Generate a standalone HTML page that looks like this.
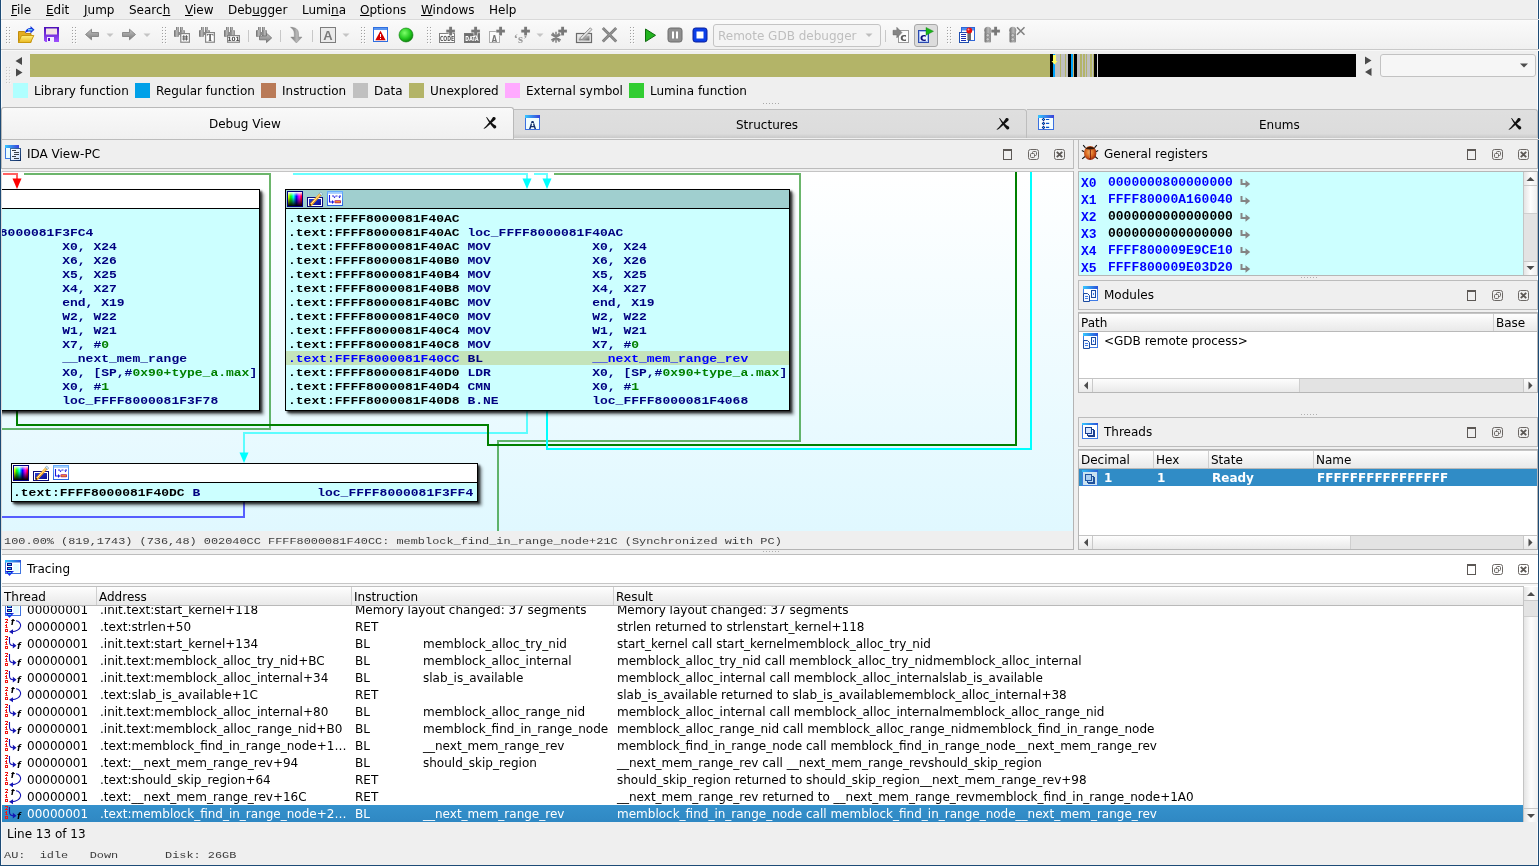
<!DOCTYPE html>
<html><head><meta charset="utf-8"><title>IDA</title>
<style>
html,body{margin:0;padding:0}
body{width:1539px;height:866px;overflow:hidden;background:#efefef;font:12px/14px "DejaVu Sans","Liberation Sans",sans-serif;color:#000;position:relative}
.a,.a div,.a svg,.a>span,.a div>span{position:absolute}
.t{white-space:pre;line-height:14px;height:14px}
.m{font:bold 13px/14px "Liberation Mono","DejaVu Sans Mono",monospace;white-space:pre;transform:scaleY(.85);transform-origin:0 10px}
.s{font:11.9px/14px "Liberation Mono","DejaVu Sans Mono",monospace;white-space:pre;color:#3c3c3c;transform:scaleY(.82);transform-origin:0 10px}
u{text-decoration:underline;text-underline-offset:1px}
.mr{transform:scaleY(.93)}
.nv{color:#000080}.bl{color:#0000ff}.gr{color:#008000}
.node{border:1px solid #000;background:#ccffff;box-shadow:2px 2px 2px rgba(0,0,0,.75),4px 4px 3px rgba(0,0,0,.35)}
.node .tb{left:0;top:0;right:0;height:18px;border-bottom:1px solid #000;background:#fff}
.hdr{background:linear-gradient(#fefefe,#f3f3f3 50%,#e9e9e9);border-top:1px solid #c6c6c6;border-bottom:1px solid #b9b9b9}
.hdr i{position:absolute;top:0;width:1px;height:17px;background:#cfcfcf}
.sel{background:#308cc6;color:#fff}
.dt{border:1px solid #bcbcbc;height:28px}
</style></head>
<body>
<div id="w" style="position:absolute;left:0;top:0;width:1539px;height:866px;will-change:transform">
<div class="a" style="left:1px;top:20px;width:1537px;height:29px;background:linear-gradient(#fafafa,#f0f0f0)"></div>
<div class="a" style="left:0;top:0;width:1px;height:866px;background:#1d4b76"></div>
<div class="a" style="left:1px;top:0;width:1px;height:865px;background:#f6f8fa"></div>
<div class="a" style="left:1538px;top:0;width:1px;height:866px;background:#1d4b76"></div>
<div class="a" style="left:1537px;top:0;width:1px;height:865px;background:#f8f8f8"></div>
<div class="a" style="left:0;top:865px;width:1539px;height:1px;background:#1d4b76"></div>
<div class="a" id="menu" style="left:0;top:0;width:1539px;height:20px"><span class="t" style="left:11px;top:3px"><u>F</u>ile</span><span class="t" style="left:46px;top:3px"><u>E</u>dit</span><span class="t" style="left:84px;top:3px"><u>J</u>ump</span><span class="t" style="left:129px;top:3px">Searc<u>h</u></span><span class="t" style="left:185px;top:3px"><u>V</u>iew</span><span class="t" style="left:228px;top:3px">Deb<u>u</u>gger</span><span class="t" style="left:302px;top:3px">Lumi<u>n</u>a</span><span class="t" style="left:360px;top:3px"><u>O</u>ptions</span><span class="t" style="left:421px;top:3px"><u>W</u>indows</span><span class="t" style="left:489px;top:3px">Help</span></div>
<div class="a" style="left:1px;top:19px;width:1538px;height:1px;background:#d9d9d9"></div>
<div class="a" style="left:1px;top:20px;width:1537px;height:1px;background:#fbfbfb"></div>
<div class="a" style="left:1px;top:49px;width:1538px;height:1px;background:#c9c9c9"></div>
<div class="a" style="left:1px;top:50px;width:1538px;height:1px;background:#f8f8f8"></div>
<svg class="a" id="toolbar" style="left:0;top:20px" width="1539" height="30" viewBox="0 20 1539 30">
<defs>
<g id="grip"><g fill="#a0a0a0"><rect x="0" y="0" width="1" height="1"/><rect x="3" y="0" width="1" height="1"/><rect x="0" y="3" width="1" height="1"/><rect x="3" y="3" width="1" height="1"/><rect x="0" y="6" width="1" height="1"/><rect x="3" y="6" width="1" height="1"/><rect x="0" y="9" width="1" height="1"/><rect x="3" y="9" width="1" height="1"/><rect x="0" y="12" width="1" height="1"/><rect x="3" y="12" width="1" height="1"/><rect x="0" y="15" width="1" height="1"/><rect x="3" y="15" width="1" height="1"/></g><g fill="#fdfdfd"><rect x="1" y="1" width="1" height="1"/><rect x="4" y="1" width="1" height="1"/><rect x="1" y="4" width="1" height="1"/><rect x="4" y="4" width="1" height="1"/><rect x="1" y="7" width="1" height="1"/><rect x="4" y="7" width="1" height="1"/><rect x="1" y="10" width="1" height="1"/><rect x="4" y="10" width="1" height="1"/><rect x="1" y="13" width="1" height="1"/><rect x="4" y="13" width="1" height="1"/><rect x="1" y="16" width="1" height="1"/><rect x="4" y="16" width="1" height="1"/></g></g>
<linearGradient id="gfold" x1="0" y1="0" x2="0" y2="1"><stop offset="0" stop-color="#fff27e"/><stop offset="1" stop-color="#e9b822"/></linearGradient>
<linearGradient id="gflop" x1="0" y1="0" x2="0" y2="1"><stop offset="0" stop-color="#4b0fb8"/><stop offset="1" stop-color="#a050ff"/></linearGradient>
<radialGradient id="gball" cx=".4" cy=".35" r=".7"><stop offset="0" stop-color="#7dff6a"/><stop offset=".6" stop-color="#22c81e"/><stop offset="1" stop-color="#0b7a0b"/></radialGradient>
<linearGradient id="gmet" x1="0" y1="0" x2="1" y2="0"><stop offset="0" stop-color="#6c6c6c"/><stop offset=".55" stop-color="#b9b9b9"/><stop offset="1" stop-color="#8a8a8a"/></linearGradient>
<linearGradient id="garr" x1="0" y1="0" x2="0" y2="1"><stop offset="0" stop-color="#c2c2c2"/><stop offset="1" stop-color="#7c7c7c"/></linearGradient>
<g id="bino"><rect x="2" y="2" width="3" height="4" fill="url(#gmet)"/><rect x="6" y="2" width="3" height="4" fill="url(#gmet)"/><rect x="0" y="5" width="5" height="7" rx="1" fill="url(#gmet)"/><rect x="6" y="5" width="5" height="7" rx="1" fill="url(#gmet)"/><rect x="4" y="7" width="3" height="3" fill="#8c8c8c"/></g>
<path id="dd" d="M0 0h7l-3.500 3.500z" fill="#c4c4c4"/>
<g id="plus"><g fill="#efefef"><rect x="2.300" y="-.5" width="4" height="9.600"/><rect x="-.5" y="2.300" width="9.600" height="4"/></g><g fill="#787878"><rect x="2.900" y="0" width="2.800" height="8.600"/><rect x="0" y="2.900" width="8.600" height="2.800"/></g></g>
<g id="bpt"><rect x=".5" y="5.500" width="6.500" height="10.500" rx="1" fill="url(#gmet)"/><circle cx="3.800" cy="3.800" r="3.500" fill="url(#gmet)"/><circle cx="3.800" cy="8.800" r="1.700" fill="#c8c8c8" stroke="#6a6a6a" stroke-width=".5"/><circle cx="3.800" cy="12.800" r="1.700" fill="#c8c8c8" stroke="#6a6a6a" stroke-width=".5"/></g>
</defs>
<use href="#grip" x="6" y="27"/><use href="#grip" x="72" y="27"/><use href="#grip" x="162" y="27"/><use href="#grip" x="361" y="27"/><use href="#grip" x="427" y="27"/><use href="#grip" x="630" y="27"/><use href="#grip" x="947" y="27"/>
<!-- open folder -->
<path d="M18.500 31.500h6l1.500 2h5v9h-12.500z" fill="#e3ac1e" stroke="#c08c0c" stroke-width="1"/>
<path d="M21.500 35.500h12.300l-3.300 7h-12z" fill="url(#gfold)" stroke="#c9980e" stroke-width="1"/>
<path d="M25 33c.5-3.500 2.700-5 5.500-5v-2l4 3.700-4 3.700v-2c-2.300 0-3.700.3-5.500 1.600z" fill="#1433dd"/><path d="M28 29.800h4.300" stroke="#7fe9ff" stroke-width="1.300"/>
<!-- floppy -->
<path d="M44 27h15v15h-13.500l-1.500-1.500z" fill="url(#gflop)"/>
<rect x="46" y="28.500" width="11" height="6" fill="#f3e2e2"/><rect x="47" y="37" width="7" height="5" fill="#f1ecff"/><rect x="48" y="38" width="2" height="3" fill="#5b12c8"/>
<!-- back / fwd -->
<path d="M85.500 34.500l6-5.300v3.300h7v4h-7v3.300z" fill="url(#garr)" stroke="#7a7a7a" stroke-width=".8"/>
<use href="#dd" x="106.500" y="33.500"/>
<path d="M135.500 34.500l-6-5.300v3.300h-7v4h7v3.300z" fill="url(#garr)" stroke="#7a7a7a" stroke-width=".8"/>
<use href="#dd" x="143.500" y="33.500"/>
<!-- binoculars -->
<use href="#bino" x="174" y="25"/><rect x="180.800" y="33.600" width="8.600" height="8.600" fill="#fff" stroke="#858585" stroke-width="1.200"/><path d="M183.800 35.200v5.400M186.400 35.200v5.400M182.300 36.900h5.600M182.300 39h5.600" stroke="#5a5a5a" stroke-width="1"/>
<use href="#bino" x="199" y="25"/><rect x="205.600" y="32.600" width="8.800" height="9.600" fill="#fff" stroke="#858585" stroke-width="1.200"/><text x="210" y="41.300" font-family="Liberation Serif,serif" font-weight="bold" font-size="10" text-anchor="middle" fill="#5a5a5a">T</text>
<use href="#bino" x="224" y="25"/><rect x="227.600" y="35.600" width="11.800" height="6.600" fill="#fff" stroke="#858585" stroke-width="1.200"/><text x="233.500" y="41.200" font-family="DejaVu Sans,sans-serif" font-weight="bold" font-size="5.800" text-anchor="middle" fill="#4a4a4a">101</text>
<rect x="248" y="30" width="1" height="12" fill="#c8c8c8"/>
<use href="#bino" x="256" y="25"/><path d="M259.500 36h7v-2.800l5.200 4.700-5.200 4.700v-2.800h-7z" fill="url(#garr)" stroke="#707070" stroke-width=".8"/>
<rect x="280" y="30" width="1" height="12" fill="#c8c8c8"/>
<path d="M290.500 27.300c5 0 8 2 8 6.500v3.300h3.500l-5.600 5.900-5.600-5.900h3.500v-3.300c0-3-1.300-5-3.800-6.500z" fill="url(#gmet)" stroke="#8a8a8a" stroke-width=".5"/>
<rect x="312" y="30" width="1" height="12" fill="#c8c8c8"/>
<rect x="320.500" y="27.500" width="15" height="15" fill="#ebebeb" stroke="#7d7d7d" stroke-width="1"/><text x="328" y="40" font-family="Liberation Sans,sans-serif" font-weight="bold" font-size="13" text-anchor="middle" fill="#7a7a7a">A</text>
<use href="#dd" x="342.500" y="33.500"/>
<!-- warning window -->
<rect x="373.500" y="27.500" width="14" height="14" fill="#fff" stroke="#2f6fe0" stroke-width="1"/><rect x="374" y="28" width="13" height="2" fill="#5a96f0"/>
<path d="M380.500 30.800l5.200 9.400h-10.400z" fill="#d40000"/><rect x="380" y="34" width="1" height="3" fill="#fff"/><rect x="380" y="38" width="1" height="1" fill="#fff"/>
<circle cx="406" cy="35" r="7" fill="url(#gball)" stroke="#0a7a0a" stroke-width=".6"/>
<!-- CODE+ DATA+ A+ 's'+ *+ -->
<rect x="439.500" y="33.500" width="15" height="9" fill="#fff" stroke="#7f7f7f"/><text x="0" y="0" transform="translate(447 41.300) scale(.82 1.25)" font-family="DejaVu Sans,sans-serif" font-weight="bold" font-size="5.600" text-anchor="middle" fill="#5a5a5a">CODE</text><use href="#plus" x="446.300" y="26.800"/>
<rect x="464.500" y="33.500" width="15" height="9" fill="#6e6e6e" stroke="#767676"/><text x="0" y="0" transform="translate(472 41.300) scale(.82 1.25)" font-family="DejaVu Sans,sans-serif" font-weight="bold" font-size="5.600" text-anchor="middle" fill="#fff">DATA</text><use href="#plus" x="471.300" y="26.800"/>
<rect x="489.500" y="31.500" width="10" height="11" fill="#fbfbfb" stroke="#adadad"/><text x="0" y="0" transform="translate(494.500 41.500) scale(.8 1.1)" font-family="DejaVu Sans,sans-serif" font-weight="bold" font-size="8.500" text-anchor="middle" fill="#777">A</text><use href="#plus" x="496.300" y="26.800"/>
<text x="520.500" y="42.700" font-family="Liberation Serif,serif" font-weight="bold" font-size="13" text-anchor="middle" fill="#9a9a9a">‘s’</text><use href="#plus" x="521.300" y="26.800"/>
<use href="#dd" x="536.500" y="33.500"/>
<path d="M556 31.800v11M551.300 34.500l9.400 5.600M551.300 40.100l9.400-5.600M552.500 32.800l7 9M559.500 32.800l-7 9" stroke="#808080" stroke-width="1.500"/><use href="#plus" x="558.300" y="26.800"/>
<!-- pencil rect -->
<defs><linearGradient id="gpen" x1="0" y1="0" x2="1" y2="1"><stop offset="0" stop-color="#fafafa"/><stop offset="1" stop-color="#5f5f5f"/></linearGradient></defs>
<rect x="576.500" y="33.500" width="15" height="9" fill="#e8e8e8" stroke="#6a6a6a" stroke-width="1.200"/><rect x="578.500" y="35.500" width="11" height="5" fill="url(#gpen)"/><path d="M579.500 40l1.200-2.600 9.600-9.600 1.700 1.700-9.600 9.600z" fill="#e4e4e4" stroke="#7a7a7a" stroke-width=".8"/>
<path d="M602.800 28l13.400 13.600M616.200 28l-13.400 13.600" stroke="#7c7c7c" stroke-width="2.800"/><path d="M602.800 28l13.400 13.600M616.200 28l-13.400 13.600" stroke="#a4a4a4" stroke-width=".8"/>
<!-- play pause stop -->
<path d="M645.500 29l10 6.300-10 6.300z" fill="#22b41f" stroke="#0d6a0d" stroke-width="1"/>
<rect x="668" y="28" width="14" height="14" rx="2.500" fill="#8f8f8f" stroke="#6d6d6d" stroke-width="1"/><rect x="672" y="31.500" width="2" height="7" fill="#fff"/><rect x="676" y="31.500" width="2" height="7" fill="#fff"/>
<rect x="693" y="28" width="14" height="14" rx="2.500" fill="#0b3fe8" stroke="#0a1f9a" stroke-width="1"/><rect x="696.500" y="31.500" width="7" height="7" fill="#fff"/>
<!-- combobox -->
<rect x="713.500" y="24.500" width="167" height="22" rx="2.500" fill="#f4f4f4" stroke="#c4c4c4"/>
<text x="718" y="39.500" font-family="DejaVu Sans,sans-serif" font-size="12" fill="#bebebe">Remote GDB debugger</text>
<path d="M865.500 33.500h7l-3.500 3.500z" fill="#bdbdbd"/>
<rect x="885" y="30" width="1" height="12" fill="#c8c8c8"/>
<!-- ->C -->
<rect x="898.500" y="30.500" width="10" height="12" fill="#fdfdfd" stroke="#9a9a9a"/><text x="903.500" y="41" font-family="DejaVu Sans,sans-serif" font-weight="bold" font-size="11" text-anchor="middle" fill="#5a5a5a">c</text><path d="M893 30.300h3.800v-3l5.200 5.300-5.200 5.300v-3h-3.800z" fill="#858585" stroke="#6a6a6a" stroke-width=".5"/>
<!-- pressed C flag -->
<rect x="914.500" y="24.500" width="23" height="22" rx="2.500" fill="#dcdcdc" stroke="#a8a8a8"/>
<rect x="918.500" y="30.500" width="10" height="12" fill="#f4f8ff" stroke="#2a4ab0"/><rect x="919.500" y="31.500" width="8" height="10" fill="none" stroke="#9ab4f0" stroke-width=".8"/><text x="923.300" y="41" font-family="DejaVu Sans,sans-serif" font-weight="bold" font-size="11" text-anchor="middle" fill="#0a0a78">c</text><path d="M926 27.400l7.500 3.900-7.500 3.900z" fill="#18b418" stroke="#0c7a0c" stroke-width=".4"/>
<!-- breakpoint list etc -->
<rect x="961.500" y="27.500" width="13" height="13" fill="#fff" stroke="#2f66d8"/><rect x="962" y="28" width="12" height="2.500" fill="#4a8cf0"/><rect x="959.500" y="32.500" width="9" height="10" fill="#fff" stroke="#1f4fb0"/><path d="M961 34.500h5M961 36.500h5M961 38.500h5M961 40.500h5" stroke="#1a2fb0" stroke-width="1" shape-rendering="crispEdges"/><rect x="967.800" y="32" width="3" height="8" fill="#6a6a6a" stroke="#444" stroke-width=".4"/><circle cx="969.300" cy="30.500" r="2.900" fill="#e81010"/><circle cx="968.500" cy="29.600" r="1" fill="#ff9a9a"/>
<use href="#bpt" x="984" y="26.500"/><use href="#plus" x="991.300" y="26.800"/>
<use href="#bpt" x="1009" y="26.500"/><path d="M1017 27.300l7.500 7.500M1024.500 27.300l-7.500 7.500" stroke="#7f7f7f" stroke-width="1.500"/>
</svg>

<svg class="a" id="nav" style="left:0;top:51px" width="1539" height="56" viewBox="0 51 1539 56" shape-rendering="crispEdges">
<use href="#grip" x="6" y="67" opacity=".5"/>
<path d="M22 57v8l-6.500-4z" fill="#4a4a4a" shape-rendering="auto"/><path d="M16 68.500v8l6.500-4z" fill="#4a4a4a" shape-rendering="auto"/>
<rect x="30" y="54" width="1326" height="23" fill="#b3b468"/>
<g>
<rect x="1050" y="54" width="3" height="23" fill="#000"/><rect x="1053" y="54" width="2" height="23" fill="#00a5ff"/><rect x="1055" y="54" width="13" height="23" fill="#c0c0c0"/>
<rect x="1060" y="54" width="1" height="23" fill="#b3b468"/><rect x="1065" y="54" width="1" height="23" fill="#b3b468"/>
<rect x="1068" y="54" width="3" height="23" fill="#000"/><rect x="1071" y="54" width="2" height="23" fill="#00a5ff"/><rect x="1073" y="54" width="1" height="23" fill="#c9b46a"/><rect x="1074" y="54" width="3" height="23" fill="#000"/>
<rect x="1077" y="54" width="17" height="23" fill="#c0c0c0"/>
<rect x="1080" y="54" width="2" height="23" fill="#b3b468"/><rect x="1083" y="54" width="2" height="23" fill="#b3b468"/><rect x="1086" y="54" width="1" height="23" fill="#b3b468"/><rect x="1090" y="54" width="2" height="23" fill="#b3b468"/><rect x="1093" y="54" width="1" height="23" fill="#b3b468"/>
<rect x="1094" y="54" width="3" height="23" fill="#000"/><rect x="1097" y="54" width="1" height="23" fill="#d8d8d8"/><rect x="1098" y="54" width="258" height="23" fill="#000"/>
<path d="M1053 55h3v6h1.500l-3 3.500-3-3.500h1.500z" fill="#ffff66" shape-rendering="auto"/>
</g>
<path d="M1365 56.500v8l6.500-4z" fill="#4a4a4a" shape-rendering="auto"/><path d="M1371.500 68v8l-6.500-4z" fill="#4a4a4a" shape-rendering="auto"/>
<g shape-rendering="auto"><rect x="1380.500" y="54.500" width="155" height="22" rx="2.500" fill="#f6f6f6" stroke="#c2c2c2"/><path d="M1520 63.500h8l-4 4z" fill="#4d4d4d"/></g>
<!-- legend -->
<rect x="13" y="83" width="15" height="15" fill="#afffff"/><rect x="135" y="83" width="15" height="15" fill="#00a0e8"/><rect x="261" y="83" width="15" height="15" fill="#b97a57"/><rect x="353" y="83" width="15" height="15" fill="#c0c0c0"/><rect x="409" y="83" width="15" height="15" fill="#b3b468"/><rect x="505" y="83" width="15" height="15" fill="#ffaaff"/><rect x="629" y="83" width="15" height="15" fill="#32cd32"/>
<g fill="#a9a9a9"><rect x="763" y="103" width="1" height="1"/><rect x="766" y="103" width="1" height="1"/><rect x="769" y="103" width="1" height="1"/><rect x="772" y="103" width="1" height="1"/><rect x="775" y="103" width="1" height="1"/><rect x="778" y="103" width="1" height="1"/></g>
</svg>
<div class="a" id="legend" style="left:0;top:84px;width:800px;height:16px">
<span class="t" style="left:34px;top:0">Library function</span><span class="t" style="left:156px;top:0">Regular function</span><span class="t" style="left:282px;top:0">Instruction</span><span class="t" style="left:374px;top:0">Data</span><span class="t" style="left:430px;top:0">Unexplored</span><span class="t" style="left:526px;top:0">External symbol</span><span class="t" style="left:650px;top:0">Lumina function</span>
</div>

<div class="a" id="tabs" style="left:0;top:106px;width:1539px;height:35px">
<div style="left:1px;top:33px;width:1538px;height:1px;background:#bcbcbc"></div>
<div style="left:1px;top:1px;width:513px;height:32px;border:1px solid #b9b9b9;border-bottom:none;border-radius:3px 3px 0 0;background:linear-gradient(#f9f9f9,#f0f0f0);box-sizing:border-box"></div>
<div style="left:514px;top:3px;width:513px;height:29px;border:1px solid #bdbdbd;border-left:none;border-bottom:none;border-radius:0 3px 0 0;background:linear-gradient(#dfdfdf,#dcdcdc 85%,#c9c9c9);box-sizing:border-box"></div>
<div style="left:1027px;top:3px;width:511px;height:29px;border:1px solid #bdbdbd;border-left:none;border-bottom:none;border-radius:0 3px 0 0;background:linear-gradient(#dfdfdf,#dcdcdc 85%,#c9c9c9);box-sizing:border-box"></div>
<span class="t" style="left:209px;top:11px">Debug View</span>
<span class="t" style="left:736px;top:12px">Structures</span>
<span class="t" style="left:1259px;top:12px">Enums</span>
<svg style="left:0;top:0" width="1539" height="35" viewBox="0 106 1539 35">
<defs><g id="tabx"><path d="M9.400 0.200C11.500 -0.500 12.800 0.800 11.900 2.600L2.600 10.800C1.600 11.600 0.200 11.900 0 11.600C3.500 8 7 4 9.400 0.200Z" fill="#111"/><path d="M2.500 0.100C2.900 -0.100 3.400 0.100 3.700 0.500C6 4 9.200 6.800 12.500 8.800C13.300 10.400 12.300 11.900 10.500 11.500C7.500 8.300 4.700 4.500 2.500 0.100Z" fill="#111"/></g></defs>
<use href="#tabx" x="483.500" y="117"/><use href="#tabx" x="996.500" y="118"/><use href="#tabx" x="1508.500" y="118"/>
<defs><linearGradient id="gtop4" x1="0" y1="0" x2="1" y2="0"><stop offset="0" stop-color="#35c8ff"/><stop offset="1" stop-color="#3a40d8"/></linearGradient></defs>
<g><rect x="525" y="115" width="15" height="15" fill="#3a70e0"/><rect x="525" y="115" width="15" height="3" fill="url(#gtop4)"/><rect x="526" y="118" width="13" height="11" fill="#f0fdff"/><text x="532.500" y="128.500" font-family="Liberation Sans,sans-serif" font-weight="bold" font-size="10.500" text-anchor="middle" fill="#12306a">A</text><rect x="531.500" y="123" width="2" height="1.200" fill="#f0fdff"/></g>
<g><rect x="1038" y="115" width="16" height="15" fill="#3a70e0"/><rect x="1038" y="115" width="16" height="3" fill="url(#gtop4)"/><rect x="1039" y="118" width="14" height="11" fill="#f4feff"/><g fill="#0a1a90"><path d="M1043.500 117.700l1.800 1.800-1.800 1.800-1.800-1.800zM1043.500 121.600l1.800 1.800-1.800 1.800-1.800-1.800zM1043.500 125.600l1.800 1.800-1.800 1.800-1.800-1.800z"/></g><g fill="#20e0f0"><rect x="1043" y="119" width="1" height="1"/><rect x="1043" y="122.900" width="1" height="1"/><rect x="1043" y="126.900" width="1" height="1"/></g><path d="M1046 119.500h3.200M1046 123.400h3.200M1046 127.400h3.200" stroke="#0a50c8" stroke-width="1.200"/></g>
</svg>
</div>

<svg class="a" width="0" height="0" style="left:0;top:0"><defs>
<g id="bfloat"><rect x=".5" y="1" width="8" height="9.500" fill="none" stroke="#5c5855" stroke-width="1"/><rect x="0" y="0" width="9" height="2" fill="#5c5855"/></g>
<g id="brest" fill="none" stroke="#6b6764" stroke-width="1"><rect x=".5" y=".5" width="10" height="10" rx="2"/><rect x="4.500" y="2.500" width="4" height="4" rx="1"/><rect x="2.500" y="4.500" width="4" height="4" rx="1" fill="#efefef"/></g>
<g id="bclose"><rect x=".5" y=".5" width="10" height="10" rx="2" fill="none" stroke="#6b6764" stroke-width="1"/><path d="M2.800 2.800l5.400 5.400M8.200 2.800l-5.400 5.400" stroke="#5c5855" stroke-width="1.900"/></g>
<g id="btns"><use href="#bfloat" x="0" y="0"/><use href="#brest" x="25" y="0"/><use href="#bclose" x="51" y="0"/></g>
<linearGradient id="spec" x1="0" y1="0" x2="1" y2="0"><stop offset="0" stop-color="#ffff00"/><stop offset=".2" stop-color="#00ff00"/><stop offset=".4" stop-color="#00ffff"/><stop offset=".6" stop-color="#0000ff"/><stop offset=".8" stop-color="#ff00ff"/><stop offset="1" stop-color="#ff0000"/></linearGradient>
<linearGradient id="specv" x1="0" y1="0" x2="0" y2="1"><stop offset="0" stop-color="#fff" stop-opacity="1"/><stop offset=".3" stop-color="#fff" stop-opacity="0"/><stop offset=".35" stop-color="#000" stop-opacity="0"/><stop offset="1" stop-color="#000" stop-opacity="1"/></linearGradient>
<linearGradient id="gblue" x1="0" y1="0" x2="1" y2="1"><stop offset="0" stop-color="#2a3fd0"/><stop offset="1" stop-color="#0a0a90"/></linearGradient>
<linearGradient id="gwin" x1="0" y1="0" x2="0" y2="1"><stop offset="0" stop-color="#6ab0ff"/><stop offset="1" stop-color="#2a62e0"/></linearGradient>
<g id="nicons">
<rect x="0" y="0" width="16" height="16" fill="#000080"/><rect x="1" y="1" width="14" height="14" fill="url(#spec)"/><rect x="1" y="1" width="14" height="14" fill="url(#specv)"/>
<rect x="20" y="6" width="16" height="10" fill="#0a0a78"/><rect x="21" y="7" width="14" height="8" fill="#fff"/><rect x="22" y="8" width="12" height="6" fill="url(#gblue)"/>
<path d="M23 12.600l9.800-10.600 2 1.800-9.800 10.600-2.600.8z" fill="#f5a21a"/><path d="M24.300 12.800l9.300-10" stroke="#fff3c0" stroke-width=".9"/><path d="M32.300 2.500l1.300-1.500 2.200 2-1.300 1.500z" fill="#d8e6f4" stroke="#4a8ab0" stroke-width=".5"/><path d="M23 12.600l1.300 1.600-1.900 1z" fill="#111"/>
<rect x="40" y="0" width="16" height="15" fill="url(#gwin)"/><rect x="41" y="2.500" width="14" height="11.500" fill="#fff"/><rect x="41" y="1" width="14" height="1" fill="#9fd0ff"/>
<path d="M42.500 4v7h3" fill="none" stroke="#1a1ae0" stroke-width="1.100"/><path d="M45 9l2.200 2-2.200 2z" fill="#1a1ae0"/><path d="M45 5h2M48.500 5h2M52 5h2" stroke="#1a1ae0" stroke-width=".9"/><path d="M46.200 5.500l1.300 1.800 1.300-1.800zM51.200 5.500l1.300 1.800 1.300-1.800z" fill="#1a1ae0"/>
<rect x="47.500" y="9.300" width="6.500" height="3" rx=".8" fill="#b0186a"/><rect x="48.300" y="10.200" width="5" height="1.200" fill="#ffa51a"/>
</g>
</defs></svg>
<div class="a" id="idaview" style="left:0;top:0;width:1076px;height:552px">
<div class="dt" style="left:1px;top:139px;width:1071px"></div><svg style="left:4px;top:144px" width="18" height="18" viewBox="0 0 18 18"><defs><linearGradient id="gtop3" x1="0" y1="0" x2="1" y2="0"><stop offset="0" stop-color="#35c8ff"/><stop offset="1" stop-color="#3a40d8"/></linearGradient><linearGradient id="gdoc" x1="0" y1="0" x2="1" y2="1"><stop offset="0" stop-color="#4a7ab0"/><stop offset="1" stop-color="#0a2a60"/></linearGradient><linearGradient id="gdocf" x1="0" y1="0" x2="1" y2="1"><stop offset="0" stop-color="#fff"/><stop offset="1" stop-color="#cfe2ff"/></linearGradient></defs><rect x="1" y="1" width="14" height="14" fill="#3d7ae0"/><rect x="1" y="1" width="14" height="3" fill="url(#gtop3)"/><rect x="2" y="4" width="12" height="10" fill="#eafcff"/><rect x="6" y="4" width="11" height="13" fill="url(#gdoc)"/><rect x="7" y="5" width="9" height="11" fill="url(#gdocf)"/><path d="M8 6.500h4M10 8.500h5M10 10.500h5M8 12.500h4M10 14.500h5" stroke="#3a4048" stroke-width="1"/></svg><span class="t" style="left:27px;top:147px">IDA View-PC</span><svg style="left:1003px;top:149px" width="64" height="12"><use href="#btns"/></svg>
<div style="left:2px;top:171px;width:1071px;height:1px;background:#c4c4c4"></div><div style="left:1073px;top:171px;width:1px;height:379px;background:#b4b4b4"></div><div style="left:2px;top:549px;width:1072px;height:1px;background:#b4b4b4"></div><div style="left:1px;top:171px;width:1px;height:379px;background:#dcdcdc"></div><div id="graph" style="left:2px;top:172px;width:1071px;height:359px;overflow:hidden;background:linear-gradient(#ffffff,#e0f8ff)"><div style="left:-2px;top:-172px;width:1539px;height:866px">
<svg style="left:0;top:0" width="1539" height="866" shape-rendering="crispEdges" fill="none" stroke-width="2">
<g stroke="#ff0000" stroke-opacity=".62"><path d="M3 174H17V180"/></g>
<g stroke="#008000" stroke-opacity=".58"><path d="M24 174H270V429H2"/><path d="M554 174H800V441H498V531"/></g>
<g stroke="#00ffff" stroke-opacity=".6"><path d="M293 174H527V180"/><path d="M534 174H547V180"/><path d="M527 411V433H244V453"/></g>
<g stroke="#0000ff" stroke-opacity=".62"><path d="M244 502V517H2"/></g>
<g stroke="#008000"><path d="M17 411V425H488V445H1016V172"/></g>
<g stroke="#00ffff"><path d="M547 411V449H1031V172"/></g>
<g stroke="none" shape-rendering="auto"><path d="M12.500 178.500h9l-4.500 10.500z" fill="#ff0000"/><path d="M522.500 178.500h9l-4.500 10.500z" fill="#00ffff"/><path d="M542.500 178.500h9l-4.500 10.500z" fill="#00ffff"/><path d="M239.500 452.500h9l-4.500 10.500z" fill="#00ffff"/></g>
</svg>
<div class="node" style="left:-244px;top:189px;width:502px;height:220px"><div class="tb"></div><span class="m " style="left:1.0px;top:22px">.text:FFFF8000081F3FC4</span><span class="m " style="left:1.0px;top:36px">.text:FFFF8000081F3FC4</span><span class="m nv" style="left:180.4px;top:36px">loc_FFFF8000081F3FC4</span><span class="m " style="left:1.0px;top:50px">.text:FFFF8000081F3FC4</span><span class="m nv" style="left:180.4px;top:50px">MOV</span><span class="m nv" style="left:305.2px;top:50px">X0, X24</span><span class="m " style="left:1.0px;top:64px">.text:FFFF8000081F3FC8</span><span class="m nv" style="left:180.4px;top:64px">MOV</span><span class="m nv" style="left:305.2px;top:64px">X6, X26</span><span class="m " style="left:1.0px;top:78px">.text:FFFF8000081F3FCC</span><span class="m nv" style="left:180.4px;top:78px">MOV</span><span class="m nv" style="left:305.2px;top:78px">X5, X25</span><span class="m " style="left:1.0px;top:92px">.text:FFFF8000081F3FD0</span><span class="m nv" style="left:180.4px;top:92px">MOV</span><span class="m nv" style="left:305.2px;top:92px">X4, X27</span><span class="m " style="left:1.0px;top:106px">.text:FFFF8000081F3FD4</span><span class="m nv" style="left:180.4px;top:106px">MOV</span><span class="m nv" style="left:305.2px;top:106px">end, X19</span><span class="m " style="left:1.0px;top:120px">.text:FFFF8000081F3FD8</span><span class="m nv" style="left:180.4px;top:120px">MOV</span><span class="m nv" style="left:305.2px;top:120px">W2, W22</span><span class="m " style="left:1.0px;top:134px">.text:FFFF8000081F3FDC</span><span class="m nv" style="left:180.4px;top:134px">MOV</span><span class="m nv" style="left:305.2px;top:134px">W1, W21</span><span class="m " style="left:1.0px;top:148px">.text:FFFF8000081F3FE0</span><span class="m nv" style="left:180.4px;top:148px">MOV</span><span class="m nv" style="left:305.2px;top:148px">X7, #<span class="gr">0</span></span><span class="m " style="left:1.0px;top:162px">.text:FFFF8000081F3FE4</span><span class="m nv" style="left:180.4px;top:162px">BL</span><span class="m nv" style="left:305.2px;top:162px">__next_mem_range</span><span class="m " style="left:1.0px;top:176px">.text:FFFF8000081F3FE8</span><span class="m nv" style="left:180.4px;top:176px">LDR</span><span class="m nv" style="left:305.2px;top:176px">X0, [SP,#<span class="gr">0x90+type_a.max</span>]</span><span class="m " style="left:1.0px;top:190px">.text:FFFF8000081F3FEC</span><span class="m nv" style="left:180.4px;top:190px">CMN</span><span class="m nv" style="left:305.2px;top:190px">X0, #<span class="gr">1</span></span><span class="m " style="left:1.0px;top:204px">.text:FFFF8000081F3FF0</span><span class="m nv" style="left:180.4px;top:204px">B.NE</span><span class="m nv" style="left:305.2px;top:204px">loc_FFFF8000081F3F78</span></div>
<div class="node" style="left:285px;top:189px;width:503px;height:220px"><div class="tb" style="background:#a0cfcf"></div><svg style="left:1px;top:1px" width="58" height="17"><use href="#nicons"/></svg><div style="left:0;top:161px;width:503px;height:14px;background:#c4e3ba"></div><span class="m " style="left:2.0px;top:22px">.text:FFFF8000081F40AC</span><span class="m " style="left:2.0px;top:36px">.text:FFFF8000081F40AC</span><span class="m nv" style="left:181.4px;top:36px">loc_FFFF8000081F40AC</span><span class="m " style="left:2.0px;top:50px">.text:FFFF8000081F40AC</span><span class="m nv" style="left:181.4px;top:50px">MOV</span><span class="m nv" style="left:306.2px;top:50px">X0, X24</span><span class="m " style="left:2.0px;top:64px">.text:FFFF8000081F40B0</span><span class="m nv" style="left:181.4px;top:64px">MOV</span><span class="m nv" style="left:306.2px;top:64px">X6, X26</span><span class="m " style="left:2.0px;top:78px">.text:FFFF8000081F40B4</span><span class="m nv" style="left:181.4px;top:78px">MOV</span><span class="m nv" style="left:306.2px;top:78px">X5, X25</span><span class="m " style="left:2.0px;top:92px">.text:FFFF8000081F40B8</span><span class="m nv" style="left:181.4px;top:92px">MOV</span><span class="m nv" style="left:306.2px;top:92px">X4, X27</span><span class="m " style="left:2.0px;top:106px">.text:FFFF8000081F40BC</span><span class="m nv" style="left:181.4px;top:106px">MOV</span><span class="m nv" style="left:306.2px;top:106px">end, X19</span><span class="m " style="left:2.0px;top:120px">.text:FFFF8000081F40C0</span><span class="m nv" style="left:181.4px;top:120px">MOV</span><span class="m nv" style="left:306.2px;top:120px">W2, W22</span><span class="m " style="left:2.0px;top:134px">.text:FFFF8000081F40C4</span><span class="m nv" style="left:181.4px;top:134px">MOV</span><span class="m nv" style="left:306.2px;top:134px">W1, W21</span><span class="m " style="left:2.0px;top:148px">.text:FFFF8000081F40C8</span><span class="m nv" style="left:181.4px;top:148px">MOV</span><span class="m nv" style="left:306.2px;top:148px">X7, #<span class="gr">0</span></span><span class="m bl" style="left:2.0px;top:162px">.text:FFFF8000081F40CC</span><span class="m nv" style="left:181.4px;top:162px">BL</span><span class="m bl" style="left:306.2px;top:162px">__next_mem_range_rev</span><span class="m " style="left:2.0px;top:176px">.text:FFFF8000081F40D0</span><span class="m nv" style="left:181.4px;top:176px">LDR</span><span class="m nv" style="left:306.2px;top:176px">X0, [SP,#<span class="gr">0x90+type_a.max</span>]</span><span class="m " style="left:2.0px;top:190px">.text:FFFF8000081F40D4</span><span class="m nv" style="left:181.4px;top:190px">CMN</span><span class="m nv" style="left:306.2px;top:190px">X0, #<span class="gr">1</span></span><span class="m " style="left:2.0px;top:204px">.text:FFFF8000081F40D8</span><span class="m nv" style="left:181.4px;top:204px">B.NE</span><span class="m nv" style="left:306.2px;top:204px">loc_FFFF8000081F4068</span></div>
<div class="node" style="left:11px;top:463px;width:465px;height:37px"><div class="tb"></div><svg style="left:1px;top:1px" width="58" height="17"><use href="#nicons"/></svg><span class="m " style="left:1.0px;top:22px">.text:FFFF8000081F40DC</span><span class="m nv" style="left:180.4px;top:22px">B</span><span class="m nv" style="left:305.2px;top:22px">loc_FFFF8000081F3FF4</span></div>
</div></div>
<span class="s" style="left:4px;top:534px">100.00% (819,1743) (736,48) 002040CC FFFF8000081F40CC: memblock_find_in_range_node+21C (Synchronized with PC)</span>
</div>

<div class="a" id="right" style="left:0;top:0;width:1539px;height:552px">
<svg width="0" height="0" style="left:0;top:0"><defs>
<linearGradient id="sbh" x1="0" y1="0" x2="1" y2="0"><stop offset="0" stop-color="#e4e4e4"/><stop offset=".5" stop-color="#fdfdfd"/><stop offset="1" stop-color="#efefef"/></linearGradient>
<linearGradient id="sbv" x1="0" y1="0" x2="0" y2="1"><stop offset="0" stop-color="#fdfdfd"/><stop offset="1" stop-color="#e9e9e9"/></linearGradient>
<g id="regarrow"><path d="M1.500 0v5h4.500" fill="none" stroke="#858585" stroke-width="2"/><path d="M5.500 1.300l4.700 3.700-4.700 3.700z" fill="#858585"/></g>
<linearGradient id="gtop" x1="0" y1="0" x2="1" y2="0"><stop offset="0" stop-color="#35c8ff"/><stop offset="1" stop-color="#2a50d8"/></linearGradient>
<g id="modicon"><rect x="0" y="0" width="15" height="15" fill="#3f7be6"/><rect x="0" y="0" width="15" height="3" fill="url(#gtop)"/><rect x="1" y="3" width="13" height="11" fill="#fff"/><rect x="8.500" y="4.500" width="4" height="7" fill="#f2f7ff" stroke="#1b4aa0"/><rect x="10" y="7" width="1" height="2" fill="#3f7be6"/><path d="M.5 7.500h4l2 2v6h-6z" fill="#f2f7ff" stroke="#1b4aa0"/><path d="M2 10.500h3M2 12.500h3" stroke="#3f7be6" stroke-width="1"/></g>
<g id="thricon"><rect x="0" y="0" width="16" height="16" fill="#3f7be6"/><rect x="0" y="0" width="16" height="2" fill="url(#gtop)"/><rect x="1" y="2" width="14" height="13" fill="#fff"/><rect x="6.500" y="7.500" width="6" height="6" fill="#eaf2ff" stroke="#1b3f90"/><rect x="5.500" y="6.500" width="6" height="6" fill="#eaf2ff" stroke="#1b3f90"/><rect x="3.500" y="4.500" width="6" height="6" fill="#d6e6ff" stroke="#1b3f90"/></g>
</defs></svg>
<div class="dt" style="left:1078px;top:139px;width:458px"></div><svg style="left:1081px;top:144px" width="18" height="18" viewBox="0 0 18 18"><defs><radialGradient id="gbug" cx=".45" cy=".45" r=".6"><stop offset="0" stop-color="#f6b060"/><stop offset=".55" stop-color="#d8661e"/><stop offset="1" stop-color="#8a1a0a"/></radialGradient></defs><path d="M2.200 1.200l2.300 2.600M15.800 1.200l-2.300 2.600M.8 6.500l2.500 1.200M17.200 6.500l-2.500 1.200M1.200 14.800l2.800-2.300M16.800 14.800l-2.800-2.300" stroke="#111" stroke-width="1.100"/><ellipse cx="9.200" cy="9" rx="6.200" ry="7" fill="url(#gbug)"/><path d="M4.300 4.800a6.200 5 0 0 1 9.800 0q-4.900 1.300-9.800 0z" fill="#3a1806"/><path d="M9.200 5.500v10" stroke="#7a1a08" stroke-width="1.300"/><path d="M8.300 6v8" stroke="#ffd9a0" stroke-width=".6" opacity=".8"/></svg><span class="t" style="left:1104px;top:147px">General registers</span><svg style="left:1467px;top:149px" width="64" height="12"><use href="#btns"/></svg>
<div style="left:1078px;top:171px;width:460px;height:105px;background:#ccffff;border:1px solid #b6b6b6;box-sizing:border-box"></div><span class="m mr bl" style="left:1081px;top:177px">X0</span><span class="m mr bl" style="left:1108px;top:176px">0000000800000000</span><svg style="left:1240px;top:179px" width="11" height="9"><use href="#regarrow"/></svg><span class="m mr bl" style="left:1081px;top:194px">X1</span><span class="m mr bl" style="left:1108px;top:193px">FFFF80000A160040</span><svg style="left:1240px;top:196px" width="11" height="9"><use href="#regarrow"/></svg><span class="m mr bl" style="left:1081px;top:211px">X2</span><span class="m mr " style="left:1108px;top:210px">0000000000000000</span><svg style="left:1240px;top:213px" width="11" height="9"><use href="#regarrow"/></svg><span class="m mr bl" style="left:1081px;top:228px">X3</span><span class="m mr " style="left:1108px;top:227px">0000000000000000</span><svg style="left:1240px;top:230px" width="11" height="9"><use href="#regarrow"/></svg><span class="m mr bl" style="left:1081px;top:245px">X4</span><span class="m mr bl" style="left:1108px;top:244px">FFFF800009E9CE10</span><svg style="left:1240px;top:247px" width="11" height="9"><use href="#regarrow"/></svg><span class="m mr bl" style="left:1081px;top:262px">X5</span><span class="m mr bl" style="left:1108px;top:261px">FFFF800009E03D20</span><svg style="left:1240px;top:264px" width="11" height="9"><use href="#regarrow"/></svg>
<svg style="left:1523px;top:172px" width="14" height="103" viewBox="0 0 14 103"><rect x="0" y="0" width="14" height="103" fill="#e3e3e3"/><rect x="0" y="0" width="1" height="103" fill="#c4c4c4"/><rect x="1" y="0" width="13" height="14" fill="url(#sbh)"/><rect x="1" y="13" width="13" height="1" fill="#c9c9c9"/><rect x="1" y="14" width="13" height="27" fill="url(#sbh)"/><rect x="1" y="41" width="13" height="1" fill="#cfcfcf"/><rect x="1" y="89" width="13" height="1" fill="#c9c9c9"/><rect x="1" y="90" width="13" height="13" fill="url(#sbh)"/><path d="M3.500 9h8l-4-4z" fill="#4d4d4d"/><path d="M3.500 94h8l-4 4z" fill="#4d4d4d"/></svg>
<div style="left:1301px;top:277px;width:1px;height:1px;background:#b0b0b0"></div><div style="left:1304px;top:277px;width:1px;height:1px;background:#b0b0b0"></div><div style="left:1307px;top:277px;width:1px;height:1px;background:#b0b0b0"></div><div style="left:1310px;top:277px;width:1px;height:1px;background:#b0b0b0"></div><div style="left:1313px;top:277px;width:1px;height:1px;background:#b0b0b0"></div><div style="left:1316px;top:277px;width:1px;height:1px;background:#b0b0b0"></div><div class="dt" style="left:1078px;top:280px;width:458px"></div><svg style="left:1083px;top:286px" width="16" height="16"><use href="#modicon"/></svg><span class="t" style="left:1104px;top:288px">Modules</span><svg style="left:1467px;top:290px" width="64" height="12"><use href="#btns"/></svg>
<div style="left:1078px;top:312px;width:460px;height:81px;background:#fff;border:1px solid #b6b6b6;box-sizing:border-box"></div><div class="hdr" style="left:1079px;top:313px;width:458px;height:17px"><i style="left:414px"></i></div><span class="t" style="left:1081px;top:316px">Path</span><span class="t" style="left:1496px;top:316px">Base</span><svg style="left:1083px;top:333px" width="16" height="16"><use href="#modicon"/></svg><span class="t" style="left:1104px;top:334px">&lt;GDB remote process&gt;</span>
<svg style="left:1079px;top:378px" width="458" height="14" viewBox="0 0 458 14"><rect width="458" height="14" fill="#e3e3e3"/><rect width="458" height="1" fill="#c4c4c4"/><rect x="0" y="1" width="13" height="13" fill="url(#sbv)"/><rect x="13" y="1" width="1" height="13" fill="#c9c9c9"/><rect x="14" y="1" width="206" height="13" fill="url(#sbv)"/><rect x="220" y="1" width="1" height="13" fill="#cfcfcf"/><rect x="444" y="1" width="1" height="13" fill="#c9c9c9"/><rect x="445" y="1" width="13" height="13" fill="url(#sbv)"/><path d="M9 3.500v8l-4-4z" fill="#4d4d4d"/><path d="M449.500 3.500v8l4-4z" fill="#4d4d4d"/></svg>
<div style="left:1301px;top:414px;width:1px;height:1px;background:#b0b0b0"></div><div style="left:1304px;top:414px;width:1px;height:1px;background:#b0b0b0"></div><div style="left:1307px;top:414px;width:1px;height:1px;background:#b0b0b0"></div><div style="left:1310px;top:414px;width:1px;height:1px;background:#b0b0b0"></div><div style="left:1313px;top:414px;width:1px;height:1px;background:#b0b0b0"></div><div style="left:1316px;top:414px;width:1px;height:1px;background:#b0b0b0"></div><div class="dt" style="left:1078px;top:417px;width:458px"></div><svg style="left:1082px;top:423px" width="16" height="16"><use href="#thricon"/></svg><span class="t" style="left:1104px;top:425px">Threads</span><svg style="left:1467px;top:427px" width="64" height="12"><use href="#btns"/></svg>
<div style="left:1078px;top:449px;width:460px;height:101px;background:#fff;border:1px solid #b6b6b6;box-sizing:border-box"></div><div class="hdr" style="left:1079px;top:450px;width:458px;height:17px"><i style="left:74px"></i><i style="left:129px"></i><i style="left:234px"></i></div><span class="t" style="left:1081px;top:453px">Decimal</span><span class="t" style="left:1156px;top:453px">Hex</span><span class="t" style="left:1211px;top:453px">State</span><span class="t" style="left:1316px;top:453px">Name</span><div class="sel" style="left:1079px;top:469px;width:458px;height:17px"></div><svg style="left:1082px;top:470px;opacity:.75" width="16" height="16"><use href="#thricon"/></svg><span class="t" style="left:1104px;top:471px;color:#fff;font-weight:bold">1</span><span class="t" style="left:1157px;top:471px;color:#fff;font-weight:bold">1</span><span class="t" style="left:1212px;top:471px;color:#fff;font-weight:bold">Ready</span><span class="t" style="left:1317px;top:471px;color:#fff;font-weight:bold">FFFFFFFFFFFFFFFF</span>
<svg style="left:1079px;top:535px" width="458" height="14" viewBox="0 0 458 14"><rect width="458" height="14" fill="#e3e3e3"/><rect width="458" height="1" fill="#c4c4c4"/><rect x="0" y="1" width="13" height="13" fill="url(#sbv)"/><rect x="13" y="1" width="1" height="13" fill="#c9c9c9"/><rect x="14" y="1" width="257" height="13" fill="url(#sbv)"/><rect x="271" y="1" width="1" height="13" fill="#cfcfcf"/><rect x="444" y="1" width="1" height="13" fill="#c9c9c9"/><rect x="445" y="1" width="13" height="13" fill="url(#sbv)"/><path d="M9 3.500v8l-4-4z" fill="#4d4d4d"/><path d="M449.500 3.500v8l4-4z" fill="#4d4d4d"/></svg>
</div>

<div class="a" id="trace" style="left:0;top:550px;width:1539px;height:316px"><div style="left:0;top:-550px;width:1539px;height:866px">
<svg width="0" height="0" style="left:0;top:0"><defs>
<linearGradient id="gtop2" x1="0" y1="0" x2="1" y2="0"><stop offset="0" stop-color="#35c8ff"/><stop offset="1" stop-color="#2a50d8"/></linearGradient>
<g id="tricon"><rect x="0" y="0" width="16" height="14" fill="#3f74e0"/><rect x="0" y="0" width="16" height="2.500" fill="url(#gtop2)"/><rect x="1" y="2.500" width="14" height="10.500" fill="#fff"/><rect x="8.300" y="4" width="5.500" height="7.700" fill="#e4fbff"/><rect x="2" y="3" width="5" height="3" fill="#0a0a90"/><rect x="3" y="4" width="3" height="1" fill="#30d8e8"/><rect x="2" y="7" width="5" height="3" fill="#0a0a90"/><rect x="3" y="8" width="3" height="1" fill="#30d8e8"/><path d="M0 11h9l-4.500 5z" fill="#1a2ff0"/><rect x="2.500" y="11" width="4" height="1" fill="#0a0a90"/><path d="M3 12.500h3" stroke="#30d8e8" stroke-width="1"/></g>
<g id="n210" fill="#f01818"><rect x="0" y="0" width="3" height="1"/><rect x="2" y="1" width="1" height="1"/><rect x="1" y="2" width="1" height="1"/><rect x="0" y="3" width="3" height="1"/>
<rect x="1" y="5" width="1" height="4"/><rect x="0" y="6" width="1" height="1"/><rect x="0" y="8" width="3" height=".6"/>
<rect x="0" y="10" width="3" height="1"/><rect x="0" y="11" width="1" height="1"/><rect x="2" y="11" width="1" height="1"/><rect x="0" y="12" width="3" height="1"/></g>
<g id="icall"><use href="#n210" x="0" y="0"/><path d="M4.500 1v5q0 3.700 4 3.700" fill="none" stroke="#1414b4" stroke-width="1.100"/><path d="M7.800 6.800l3.700 2.900-3.700 2.900z" fill="#1414b4"/><text x="12" y="12.500" font-family="DejaVu Sans,sans-serif" font-style="italic" font-weight="bold" font-size="8.500" fill="#000">f</text></g>
<g id="iret"><use href="#n210" x="0" y="0"/><text x="5.800" y="6" font-family="DejaVu Sans,sans-serif" font-style="italic" font-weight="bold" font-size="8.500" fill="#000">f</text><path d="M11 1.800C14 2 16 4.500 15.600 7.200C15 10.500 11 12.500 7 12.600" fill="none" stroke="#1414b4" stroke-width="1.100"/><path d="M8 10.200l-4 2.500 4 2.500z" fill="#1414b4"/></g>
</defs></svg>
<div class="dots551" style="left:763px;top:551px;width:1px;height:1px;background:#adadad"></div><div class="dots551" style="left:766px;top:551px;width:1px;height:1px;background:#adadad"></div><div class="dots551" style="left:769px;top:551px;width:1px;height:1px;background:#adadad"></div><div class="dots551" style="left:772px;top:551px;width:1px;height:1px;background:#adadad"></div><div class="dots551" style="left:775px;top:551px;width:1px;height:1px;background:#adadad"></div><div class="dots551" style="left:778px;top:551px;width:1px;height:1px;background:#adadad"></div><div style="left:2px;top:554px;width:1536px;height:1px;background:#bdbdbd"></div><div style="left:2px;top:555px;width:1536px;height:28px;background:#fff"></div><div style="left:2px;top:583px;width:1536px;height:1px;background:#c6c6c6"></div><div style="left:2px;top:584px;width:1536px;height:2px;background:#f7f7f7"></div><svg style="left:5px;top:560px" width="17" height="17"><use href="#tricon"/></svg><span class="t" style="left:27px;top:562px">Tracing</span><svg style="left:1467px;top:564px" width="64" height="12"><g><use href="#bfloat"/><use href="#brest" x="25"/><use href="#bclose" x="51"/></g></svg>
<div style="left:2px;top:586px;width:1536px;height:236px;background:#fff"></div><svg style="left:5px;top:602px" width="19" height="17"><use href="#tricon"/></svg><span class="t" style="left:27px;top:603px">00000001</span><span class="t" style="left:100px;top:603px">.init.text:start_kernel+118</span><span class="t" style="left:355px;top:603px">Memory layout changed: 37 segments</span><span class="t" style="left:617px;top:603px">Memory layout changed: 37 segments</span>
<svg style="left:5px;top:619px" width="19" height="17"><use href="#iret"/></svg><span class="t" style="left:27px;top:620px">00000001</span><span class="t" style="left:100px;top:620px">.text:strlen+50</span><span class="t" style="left:355px;top:620px">RET</span><span class="t" style="left:617px;top:620px">strlen returned to strlenstart_kernel+118</span>
<svg style="left:5px;top:636px" width="19" height="17"><use href="#icall"/></svg><span class="t" style="left:27px;top:637px">00000001</span><span class="t" style="left:100px;top:637px">.init.text:start_kernel+134</span><span class="t" style="left:355px;top:637px">BL</span><span class="t" style="left:423px;top:637px">memblock_alloc_try_nid</span><span class="t" style="left:617px;top:637px">start_kernel call start_kernelmemblock_alloc_try_nid</span>
<svg style="left:5px;top:653px" width="19" height="17"><use href="#icall"/></svg><span class="t" style="left:27px;top:654px">00000001</span><span class="t" style="left:100px;top:654px">.init.text:memblock_alloc_try_nid+BC</span><span class="t" style="left:355px;top:654px">BL</span><span class="t" style="left:423px;top:654px">memblock_alloc_internal</span><span class="t" style="left:617px;top:654px">memblock_alloc_try_nid call memblock_alloc_try_nidmemblock_alloc_internal</span>
<svg style="left:5px;top:670px" width="19" height="17"><use href="#icall"/></svg><span class="t" style="left:27px;top:671px">00000001</span><span class="t" style="left:100px;top:671px">.init.text:memblock_alloc_internal+34</span><span class="t" style="left:355px;top:671px">BL</span><span class="t" style="left:423px;top:671px">slab_is_available</span><span class="t" style="left:617px;top:671px">memblock_alloc_internal call memblock_alloc_internalslab_is_available</span>
<svg style="left:5px;top:687px" width="19" height="17"><use href="#iret"/></svg><span class="t" style="left:27px;top:688px">00000001</span><span class="t" style="left:100px;top:688px">.text:slab_is_available+1C</span><span class="t" style="left:355px;top:688px">RET</span><span class="t" style="left:617px;top:688px">slab_is_available returned to slab_is_availablememblock_alloc_internal+38</span>
<svg style="left:5px;top:704px" width="19" height="17"><use href="#icall"/></svg><span class="t" style="left:27px;top:705px">00000001</span><span class="t" style="left:100px;top:705px">.init.text:memblock_alloc_internal+80</span><span class="t" style="left:355px;top:705px">BL</span><span class="t" style="left:423px;top:705px">memblock_alloc_range_nid</span><span class="t" style="left:617px;top:705px">memblock_alloc_internal call memblock_alloc_internalmemblock_alloc_range_nid</span>
<svg style="left:5px;top:721px" width="19" height="17"><use href="#icall"/></svg><span class="t" style="left:27px;top:722px">00000001</span><span class="t" style="left:100px;top:722px">.init.text:memblock_alloc_range_nid+B0</span><span class="t" style="left:355px;top:722px">BL</span><span class="t" style="left:423px;top:722px">memblock_find_in_range_node</span><span class="t" style="left:617px;top:722px">memblock_alloc_range_nid call memblock_alloc_range_nidmemblock_find_in_range_node</span>
<svg style="left:5px;top:738px" width="19" height="17"><use href="#icall"/></svg><span class="t" style="left:27px;top:739px">00000001</span><span class="t" style="left:100px;top:739px">.text:memblock_find_in_range_node+1…</span><span class="t" style="left:355px;top:739px">BL</span><span class="t" style="left:423px;top:739px">__next_mem_range_rev</span><span class="t" style="left:617px;top:739px">memblock_find_in_range_node call memblock_find_in_range_node__next_mem_range_rev</span>
<svg style="left:5px;top:755px" width="19" height="17"><use href="#icall"/></svg><span class="t" style="left:27px;top:756px">00000001</span><span class="t" style="left:100px;top:756px">.text:__next_mem_range_rev+94</span><span class="t" style="left:355px;top:756px">BL</span><span class="t" style="left:423px;top:756px">should_skip_region</span><span class="t" style="left:617px;top:756px">__next_mem_range_rev call __next_mem_range_revshould_skip_region</span>
<svg style="left:5px;top:772px" width="19" height="17"><use href="#iret"/></svg><span class="t" style="left:27px;top:773px">00000001</span><span class="t" style="left:100px;top:773px">.text:should_skip_region+64</span><span class="t" style="left:355px;top:773px">RET</span><span class="t" style="left:617px;top:773px">should_skip_region returned to should_skip_region__next_mem_range_rev+98</span>
<svg style="left:5px;top:789px" width="19" height="17"><use href="#iret"/></svg><span class="t" style="left:27px;top:790px">00000001</span><span class="t" style="left:100px;top:790px">.text:__next_mem_range_rev+16C</span><span class="t" style="left:355px;top:790px">RET</span><span class="t" style="left:617px;top:790px">__next_mem_range_rev returned to __next_mem_range_revmemblock_find_in_range_node+1A0</span>
<div style="left:2px;top:805px;width:1522px;height:17px;background:linear-gradient(#3591cc,#2f88c3)"></div><svg style="left:5px;top:806px" width="19" height="17"><use href="#icall"/></svg><span class="t" style="left:27px;top:807px;color:#fff">00000001</span><span class="t" style="left:100px;top:807px;color:#fff">.text:memblock_find_in_range_node+2…</span><span class="t" style="left:355px;top:807px;color:#fff">BL</span><span class="t" style="left:423px;top:807px;color:#fff">__next_mem_range_rev</span><span class="t" style="left:617px;top:807px;color:#fff">memblock_find_in_range_node call memblock_find_in_range_node__next_mem_range_rev</span>
<div class="hdr" style="left:2px;top:586px;width:1522px;height:18px;border-top-color:#c0c0c0"><i style="left:94px;height:18px"></i><i style="left:349px;height:18px"></i><i style="left:611px;height:18px"></i></div><span class="t" style="left:4px;top:590px">Thread</span><span class="t" style="left:99px;top:590px">Address</span><span class="t" style="left:354px;top:590px">Instruction</span><span class="t" style="left:616px;top:590px">Result</span>
<svg style="left:1523px;top:587px" width="15" height="235" viewBox="0 0 15 235"><rect width="15" height="235" fill="#e3e3e3"/><rect width="1" height="235" fill="#c4c4c4"/><rect x="1" y="0" width="14" height="13" fill="url(#sbh)"/><rect x="1" y="13" width="14" height="1" fill="#c9c9c9"/><rect x="1" y="29" width="14" height="1" fill="#cfcfcf"/><rect x="1" y="30" width="14" height="192" fill="url(#sbh)"/><rect x="1" y="221" width="14" height="1" fill="#c9c9c9"/><rect x="1" y="222" width="14" height="13" fill="url(#sbh)"/><path d="M4 9h8l-4-4z" fill="#4d4d4d"/><path d="M4 227h8l-4 4z" fill="#4d4d4d"/></svg>
<span class="t" style="left:7px;top:827px">Line 13 of 13</span><span class="s" style="left:4px;top:848px">AU:  idle   Down</span><span class="s" style="left:165px;top:848px">Disk: 26GB</span>
</div></div>

</div>
</body></html>
